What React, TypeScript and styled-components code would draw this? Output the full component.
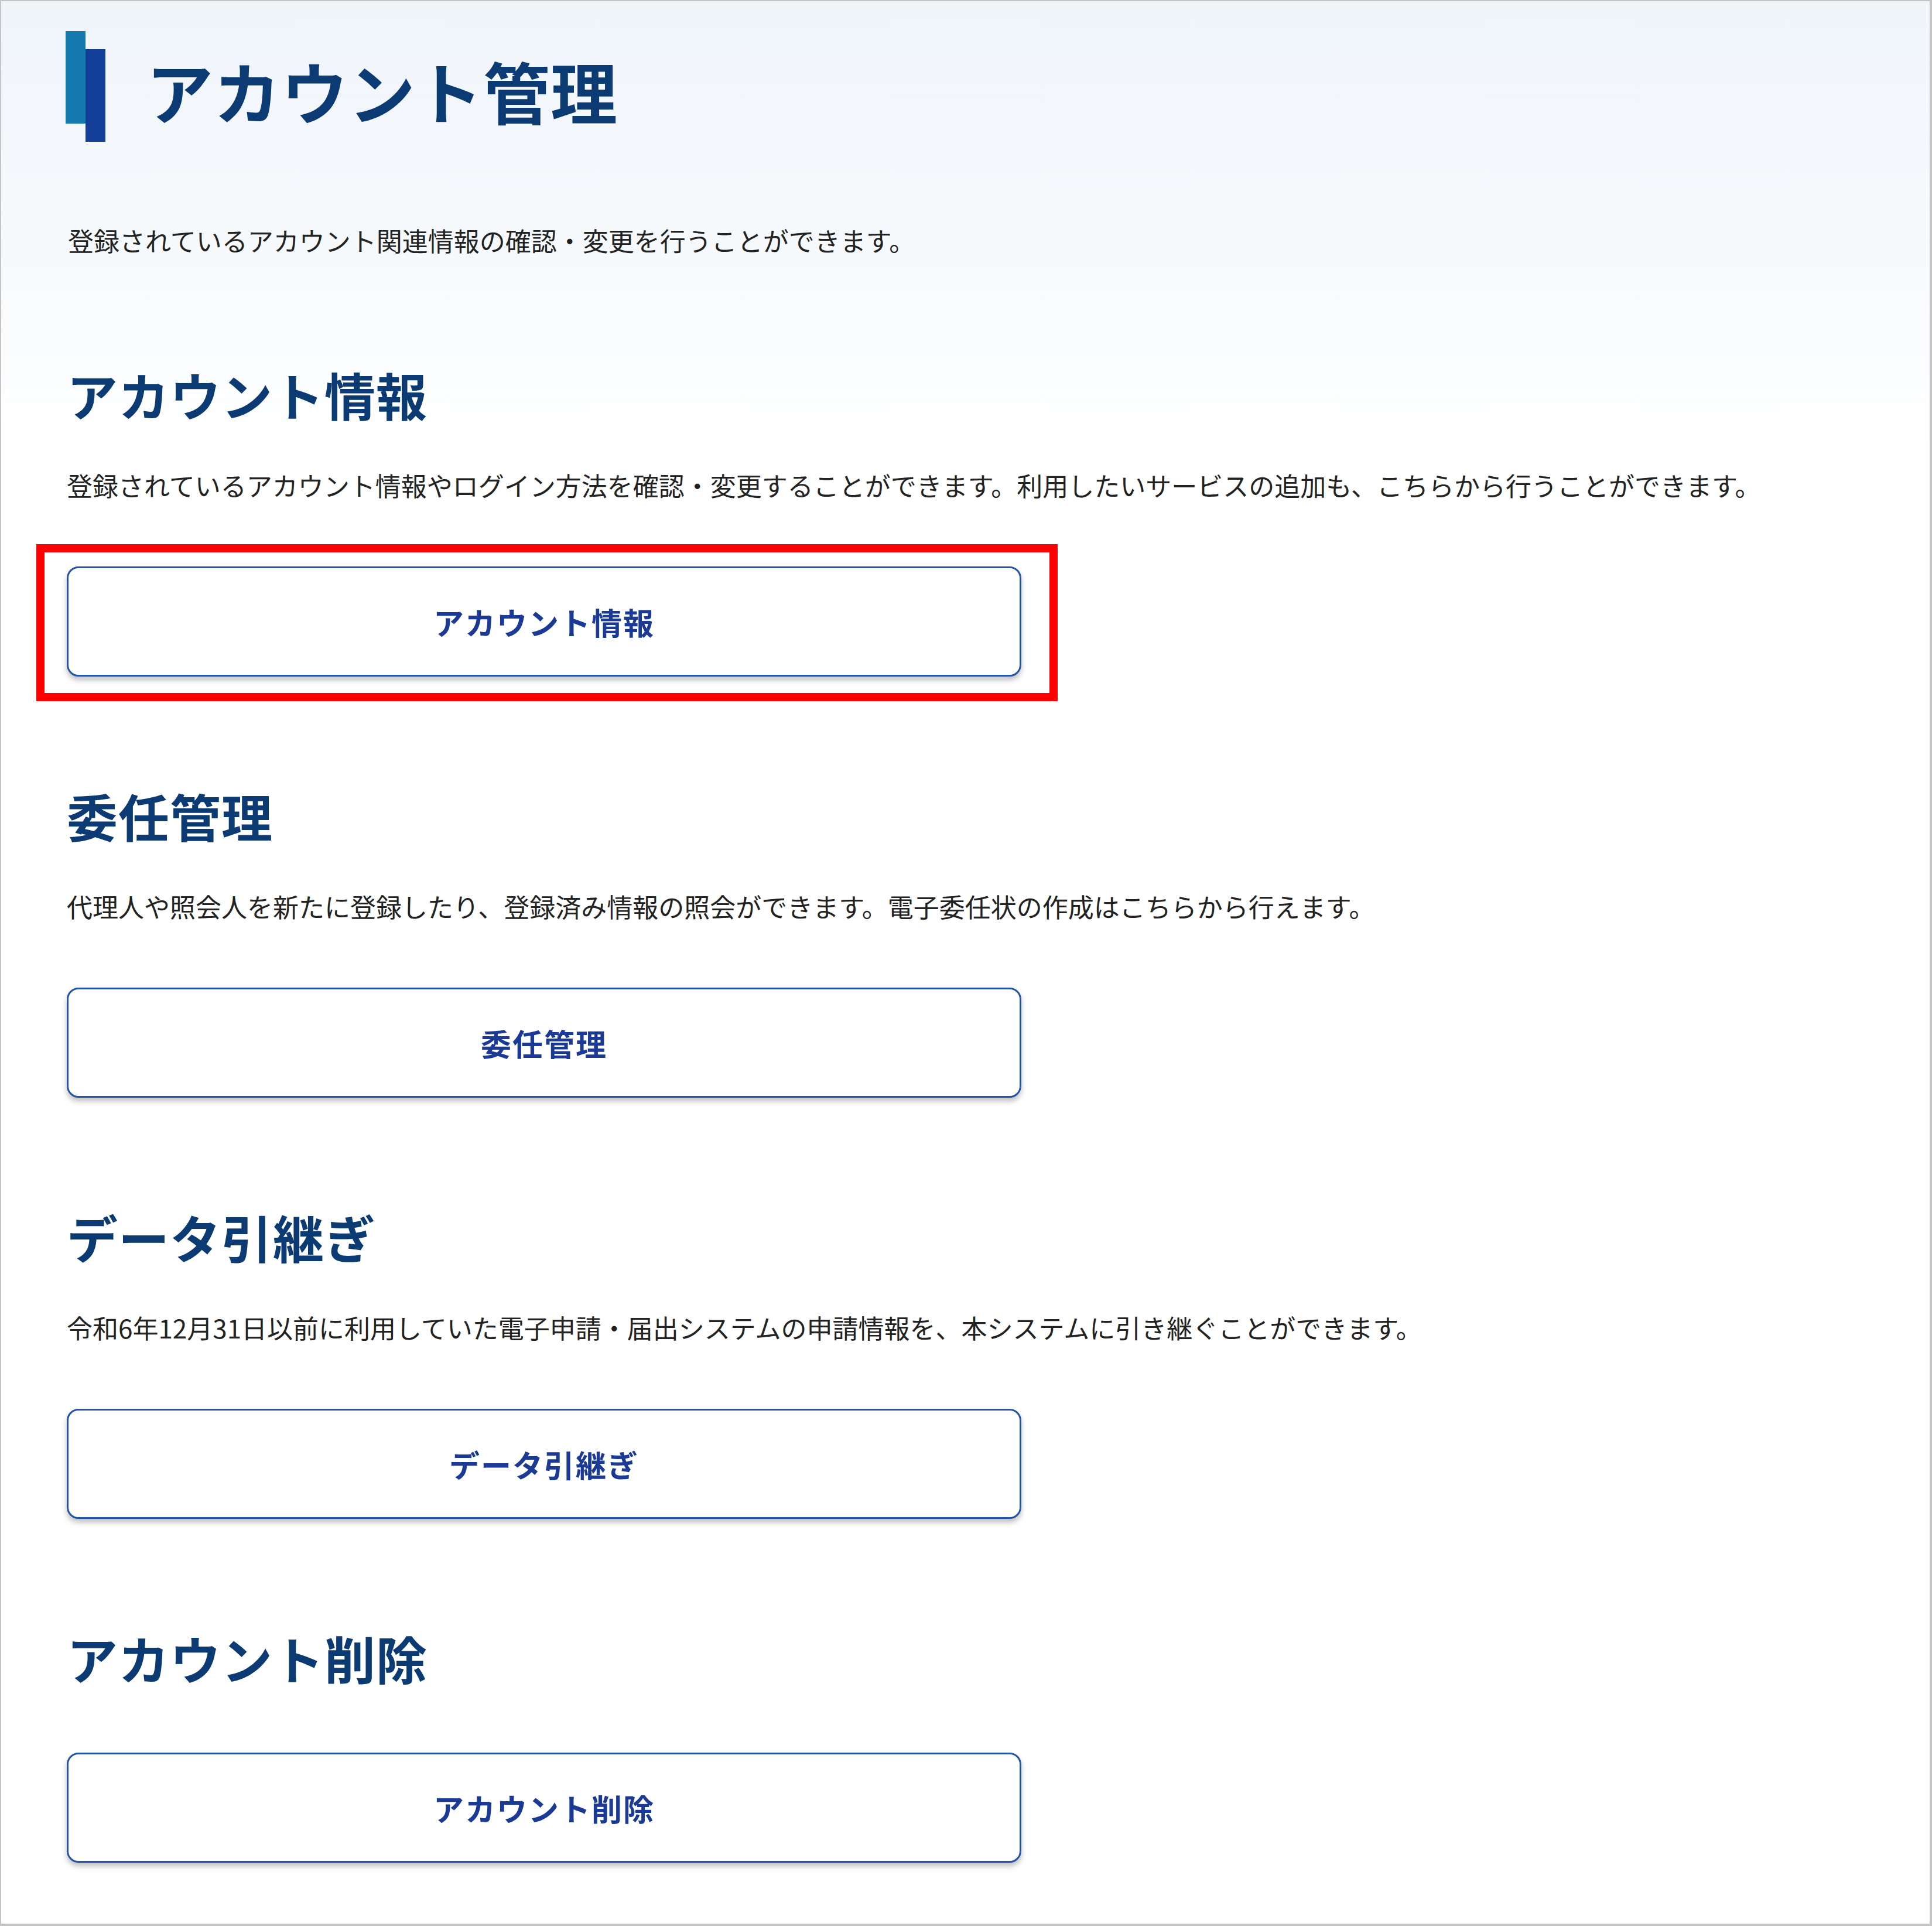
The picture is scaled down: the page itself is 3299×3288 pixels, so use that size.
import React from 'react';
import styled, { createGlobalStyle } from 'styled-components';

const GlobalStyle = createGlobalStyle`
  html, body {
    margin: 0;
    padding: 0;
    background: #ffffff;
  }
  body {
    font-family: "Noto Sans CJK JP", "Noto Sans", sans-serif;
  }
`;

const Frame = styled.div`
  box-sizing: border-box;
  width: 3299px;
  height: 3288px;
  border: 2px solid #c4c4c4;
  border-right-width: 4px;
  border-bottom-width: 4px;
  background: linear-gradient(180deg, #f0f5fa 0px, #f6f9fc 400px, #ffffff 760px);
  padding: 51px 0 0 110px;
`;

const TitleRow = styled.header`
  display: flex;
  align-items: center;
  gap: 70px;
`;

const TitleMark = styled.div`
  display: flex;
  height: 189px;
`;

const Bar = styled.span<{ $tone: 'light' | 'dark' }>`
  display: block;
  width: 34px;
  height: 158px;
  align-self: ${(p) => (p.$tone === 'light' ? 'flex-start' : 'flex-end')};
  background: ${(p) => (p.$tone === 'light' ? '#1479ac' : '#143f98')};
`;

const Title = styled.h1`
  margin: 0;
  padding-top: 14px;
  font-size: 114px;
  line-height: 1.2;
  font-weight: 700;
  letter-spacing: 1px;
  color: #0c3a72;
`;

const Lead = styled.p`
  margin: 135px 0 0 4px;
  font-size: 44px;
  line-height: 66px;
  color: #222222;
`;

const Sections = styled.main`
  display: flex;
  flex-direction: column;
  gap: 181px;
  margin-top: 174px;
  padding-left: 2px;
`;

const Section = styled.section`
  display: flex;
  flex-direction: column;
  align-items: flex-start;
`;

const Heading = styled.h2`
  margin: 0 0 66px;
  font-size: 87px;
  line-height: 112px;
  font-weight: 700;
  letter-spacing: 1px;
  color: #0c3a72;
`;

const Desc = styled.p`
  margin: 0 0 106px;
  font-size: 44px;
  line-height: 66px;
  color: #222222;
`;

// the red frame is an annotation laid over the first button
const Highlight = styled.div<{ $on?: boolean }>`
  position: relative;

  ${Heading} + & {
    margin-top: 40px;
  }

  &::after {
    content: '';
    display: ${(p) => (p.$on ? 'block' : 'none')};
    position: absolute;
    left: -52px;
    right: -62px;
    top: -38px;
    bottom: -42px;
    border: 14px solid #ff0000;
    pointer-events: none;
  }
`;

const ActionButton = styled.button`
  box-sizing: border-box;
  display: flex;
  align-items: center;
  justify-content: center;
  width: 1630px;
  height: 188px;
  border: 3px solid #2354a6;
  border-radius: 20px;
  background: #ffffff;
  box-shadow: 0 6px 10px rgba(0, 0, 0, 0.25);
  font-family: "Noto Sans CJK JP", "Noto Sans", sans-serif;
  font-size: 52px;
  font-weight: 700;
  letter-spacing: 2px;
  color: #1a3a96;
  cursor: pointer;
  padding: 0;
`;

type Item = {
  title: string;
  desc?: string;
  highlight?: boolean;
};

const items: Item[] = [
  {
    title: 'アカウント情報',
    desc: '登録されているアカウント情報やログイン方法を確認・変更することができます。利用したいサービスの追加も、こちらから行うことができます。',
    highlight: true,
  },
  {
    title: '委任管理',
    desc: '代理人や照会人を新たに登録したり、登録済み情報の照会ができます。電子委任状の作成はこちらから行えます。',
  },
  {
    title: 'データ引継ぎ',
    desc: '令和6年12月31日以前に利用していた電子申請・届出システムの申請情報を、本システムに引き継ぐことができます。',
  },
  {
    title: 'アカウント削除',
  },
];

const App: React.FC = () => {
  return (
    <>
      <GlobalStyle />
      <Frame>
        <TitleRow>
          <TitleMark>
            <Bar $tone="light" />
            <Bar $tone="dark" />
          </TitleMark>
          <Title>アカウント管理</Title>
        </TitleRow>

        <Lead>登録されているアカウント関連情報の確認・変更を行うことができます。</Lead>

        <Sections>
          {items.map((item) => (
            <Section key={item.title}>
              <Heading>{item.title}</Heading>
              {item.desc && <Desc>{item.desc}</Desc>}
              <Highlight $on={item.highlight}>
                <ActionButton type="button">{item.title}</ActionButton>
              </Highlight>
            </Section>
          ))}
        </Sections>
      </Frame>
    </>
  );
};

export default App;
